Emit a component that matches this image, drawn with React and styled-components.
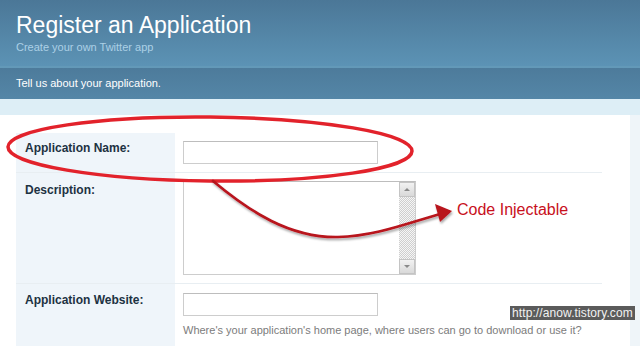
import React from "react";
import styled, { createGlobalStyle } from "styled-components";

const Global = createGlobalStyle`
  html, body {
    margin: 0;
    padding: 0;
    background: #fff;
    overflow: hidden;
  }
  body {
    font-family: "Liberation Sans", Arial, sans-serif;
  }
`;

function App() {
  return (
    <Page>
      <Global />
      <Header>
        <h1>Register an Application</h1>
        <p>Create your own Twitter app</p>
      </Header>
      <SubBar>Tell us about your application.</SubBar>
      <Band />
      <Main>
        <Content>
          <Form>
            <Row>
              <Label>Application Name:</Label>
              <Field>
                <TextInput type="text" />
              </Field>
            </Row>
            <Row>
              <Label $top={10}>Description:</Label>
              <Field>
                <TextBox>
                  <textarea />
                  <ScrollBar>
                    <ScrollButton>
                      <Arrow $up />
                    </ScrollButton>
                    <Track />
                    <ScrollButton>
                      <Arrow />
                    </ScrollButton>
                  </ScrollBar>
                </TextBox>
              </Field>
            </Row>
            <Row $last>
              <Label $top={9}>Application Website:</Label>
              <Field $top={9}>
                <TextInput type="text" />
                <Help>
                  Where's your application's home page, where users can go to
                  download or use it?
                </Help>
              </Field>
            </Row>
          </Form>
        </Content>
        <Side />
      </Main>

      <Markup viewBox="0 0 640 346" width="640" height="346">
        <defs>
          <filter id="shadow" x="-10%" y="-30%" width="120%" height="160%">
            <feDropShadow dx="1" dy="2" stdDeviation="1.2" floodColor="#000" floodOpacity="0.35" />
          </filter>
        </defs>
        <ellipse
          cx="210"
          cy="149"
          rx="202"
          ry="32"
          fill="none"
          stroke="#e2222b"
          strokeWidth="3.5"
          transform="rotate(0.6 210 149)"
        />
        <g filter="url(#shadow)">
          <path
            d="M213 181 C 250 212, 290 238, 338 237 C 375 236, 405 224, 440 214"
            fill="none"
            stroke="#b8121c"
            strokeWidth="2.6"
            strokeLinecap="round"
          />
          <polygon points="452,211 435,204 440,222" fill="#b8121c" />
        </g>
      </Markup>
      <Callout>Code Injectable</Callout>
      <Watermark>http://anow.tistory.com</Watermark>
    </Page>
  );
}

export default App;

const Page = styled.div`
  position: relative;
  display: flex;
  flex-direction: column;
  width: 640px;
  height: 346px;
  overflow: hidden;
  background: #fff;
`;

const Header = styled.header`
  height: 68px;
  flex-shrink: 0;
  box-sizing: border-box;
  padding: 12px 16px 0;
  background: linear-gradient(#4b7797, #5c93b5);
  border-bottom: 2px solid #6399b8;
  h1 {
    margin: 0;
    font-size: 23px;
    line-height: 26px;
    font-weight: normal;
    color: #fff;
  }
  p {
    margin: 3px 0 0;
    font-size: 11px;
    line-height: 13px;
    color: #acd0e6;
  }
`;

const SubBar = styled.div`
  height: 31px;
  flex-shrink: 0;
  box-sizing: border-box;
  padding: 9px 16px 0;
  background: linear-gradient(#4d7b9b, #5486a7);
  color: #fff;
  font-size: 11px;
  line-height: 13px;
`;

const Band = styled.div`
  height: 16px;
  flex-shrink: 0;
  background: #ddeef6;
`;

const Main = styled.div`
  display: flex;
  flex: 1;
`;

const Content = styled.div`
  flex: 1;
  display: flex;
  padding: 18px 0 0 16px;
`;

const Side = styled.div`
  width: 10px;
  background: #eff5f9;
`;

const Form = styled.div`
  width: 586px;
  display: flex;
  flex-direction: column;
`;

const Row = styled.div`
  display: flex;
  flex: ${(p) => (p.$last ? 1 : "none")};
  border-bottom: ${(p) => (p.$last ? "none" : "1px solid #e8eef2")};
`;

const Label = styled.div`
  width: 159px;
  flex-shrink: 0;
  box-sizing: border-box;
  padding: ${(p) => p.$top || 8}px 9px 0;
  background: #eff5fa;
  color: #1d3242;
  font-size: 12px;
  line-height: 14px;
  font-weight: bold;
`;

const Field = styled.div`
  flex: 1;
  padding: ${(p) => p.$top || 8}px 0 8px 8px;
`;

const TextInput = styled.input`
  display: block;
  width: 195px;
  height: 23px;
  box-sizing: border-box;
  margin: 0;
  border: 1px solid #cdcdcd;
  border-top-color: #bdbdbd;
  background: #fff;
  outline: none;
`;

const TextBox = styled.div`
  display: flex;
  width: 233px;
  height: 94px;
  box-sizing: border-box;
  border: 1px solid #cdcdcd;
  border-top-color: #bdbdbd;
  background: #fff;
  textarea {
    flex: 1;
    border: none;
    resize: none;
    outline: none;
    margin: 0;
    padding: 2px;
  }
`;

const ScrollBar = styled.div`
  width: 16px;
  display: flex;
  flex-direction: column;
`;

const ScrollButton = styled.div`
  height: 15px;
  box-sizing: border-box;
  border: 1px solid #c4c4c4;
  background: linear-gradient(#f2f2f2, #d9d9d9);
  display: flex;
  align-items: center;
  justify-content: center;
`;

const Arrow = styled.span`
  width: 0;
  height: 0;
  border-left: 3px solid transparent;
  border-right: 3px solid transparent;
  ${(p) =>
    p.$up ? "border-bottom: 3px solid #8a8a8a;" : "border-top: 3px solid #8a8a8a;"}
`;

const Track = styled.div`
  flex: 1;
  background-color: #fff;
  background-image: repeating-conic-gradient(#cfcfcf 0 25%, #f6f6f6 0 50%);
  background-size: 2px 2px;
`;

const Help = styled.div`
  margin-top: 8px;
  font-size: 11px;
  line-height: 13px;
  color: #7c7c7c;
`;

const Markup = styled.svg`
  position: absolute;
  left: 0;
  top: 0;
  pointer-events: none;
`;

const Callout = styled.span`
  position: absolute;
  left: 457px;
  top: 201px;
  font-size: 16px;
  line-height: 18px;
  color: #c8101c;
`;

const Watermark = styled.span`
  position: absolute;
  left: 510px;
  top: 306px;
  padding: 0 2px;
  background: #5b5b5b;
  color: #f2f2f2;
  font-size: 12px;
  line-height: 14px;
  letter-spacing: 0.1px;
`;
